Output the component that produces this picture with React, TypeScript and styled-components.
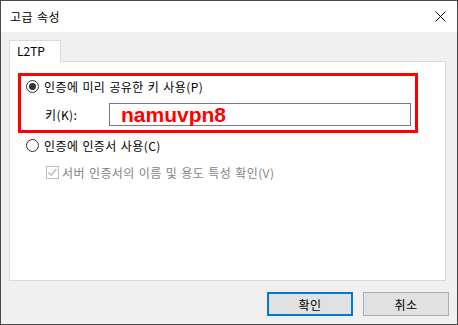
import styled, { createGlobalStyle } from "styled-components";

const GlobalStyle = createGlobalStyle`
  html, body {
    margin: 0;
    padding: 0;
    background: #ffffff;
  }
  * {
    box-sizing: border-box;
  }
`;

const FONT = `"Noto Sans CJK KR", "Noto Sans", sans-serif`;

const Window = styled.div`
  display: flex;
  flex-direction: column;
  width: 458px;
  height: 325px;
  border: 1px solid #4a4a4a;
  background: #f0f0f0;
  font-family: ${FONT};
  font-size: 12px;
  letter-spacing: 0.4px;
  word-spacing: 1px;
  color: #000;
`;

const TitleBar = styled.div`
  display: flex;
  align-items: center;
  justify-content: space-between;
  height: 31px;
  padding-left: 9px;
  padding-right: 11px;
  background: #ffffff;
`;

const Title = styled.span`
  line-height: 16px;
`;

const Body = styled.div`
  flex: 1;
  display: flex;
  flex-direction: column;
  padding: 8px 8px 8px 8px;
`;

const TabStrip = styled.div`
  display: flex;
  height: 22px;
  position: relative;
  z-index: 1;
`;

const Tab = styled.div`
  width: 52px;
  height: 22px;
  padding-left: 7px;
  line-height: 20px;
  letter-spacing: 0;
  background: #ffffff;
  border: 1px solid #d9d9d9;
  border-bottom: none;
`;

const Panel = styled.div`
  flex: 1;
  display: flex;
  flex-direction: column;
  margin-top: -1px;
  margin-right: 3px;
  padding: 11px 8px 0 8px;
  background: #ffffff;
  border: 1px solid #d9d9d9;
`;

const Highlight = styled.div`
  display: flex;
  flex-direction: column;
  width: 400px;
  padding: 0 0 4px 5px;
  border: 3px solid #ff0000;
`;

const Row = styled.div<{ $indent?: number; $gap?: number; $top?: number }>`
  display: flex;
  align-items: center;
  height: 20px;
  margin-top: ${(p) => p.$top ?? 0}px;
  padding-left: ${(p) => p.$indent ?? 0}px;
  gap: ${(p) => p.$gap ?? 5}px;
  white-space: nowrap;
`;

const Radio = styled.span<{ $checked?: boolean }>`
  display: inline-flex;
  align-items: center;
  justify-content: center;
  width: 13px;
  height: 13px;
  border: 1px solid #333333;
  border-radius: 50%;
  background: #ffffff;
  flex-shrink: 0;
  &::after {
    content: "";
    display: ${(p) => (p.$checked ? "block" : "none")};
    width: 7px;
    height: 7px;
    border-radius: 50%;
    background: #333333;
  }
`;

const KeyRow = styled.div`
  display: flex;
  align-items: center;
  margin-top: 7px;
`;

const KeyLabel = styled.span`
  flex: 0 0 64px;
  margin-left: 19px;
`;

const KeyInput = styled.div`
  flex: 0 0 302px;
  height: 23px;
  padding-left: 11px;
  border: 1px solid #7a7a7a;
  font-family: "Liberation Sans", Arial, sans-serif;
  font-weight: bold;
  font-size: 21px;
  line-height: 21px;
  letter-spacing: 0;
  color: #ff0000;
`;

const Check = styled.span`
  display: inline-flex;
  width: 13px;
  height: 13px;
  border: 1px solid #bcbcbc;
  background: #ffffff;
  flex-shrink: 0;
`;

const Label = styled.span<{ $disabled?: boolean }>`
  color: ${(p) => (p.$disabled ? "#838383" : "#000")};
`;

const ButtonRow = styled.div`
  display: flex;
  justify-content: flex-end;
  gap: 10px;
  margin-top: 11px;
`;

const Button = styled.button<{ $primary?: boolean }>`
  width: 86px;
  height: 24px;
  padding: 0;
  font-family: ${FONT};
  font-size: 12px;
  letter-spacing: 0.4px;
  color: #000;
  background: #e1e1e1;
  border: ${(p) => (p.$primary ? "2px solid #0078d7" : "1px solid #adadad")};
`;

export default function App() {
  return (
    <>
      <GlobalStyle />
      <Window>
        <TitleBar>
          <Title>고급 속성</Title>
          <svg width="11" height="11" viewBox="0 0 11 11">
            <path d="M0.5 0.5 L10.5 10.5 M10.5 0.5 L0.5 10.5" stroke="#000" strokeWidth="1" />
          </svg>
        </TitleBar>
        <Body>
          <TabStrip>
            <Tab>L2TP</Tab>
          </TabStrip>
          <Panel>
            <Highlight>
              <Row>
                <Radio $checked />
                <Label>인증에 미리 공유한 키 사용(P)</Label>
              </Row>
              <KeyRow>
                <KeyLabel>키(K):</KeyLabel>
                <KeyInput>namuvpn8</KeyInput>
              </KeyRow>
            </Highlight>
            <Row $indent={8} $top={2}>
              <Radio />
              <Label>인증에 인증서 사용(C)</Label>
            </Row>
            <Row $indent={28} $gap={3} $top={7}>
              <Check>
                <svg width="11" height="11" viewBox="0 0 11 11">
                  <path d="M1.5 5.5 L4.2 8.3 L9.5 2" fill="none" stroke="#bcbcbc" strokeWidth="1.4" />
                </svg>
              </Check>
              <Label $disabled>서버 인증서의 이름 및 용도 특성 확인(V)</Label>
            </Row>
          </Panel>
          <ButtonRow>
            <Button $primary>확인</Button>
            <Button>취소</Button>
          </ButtonRow>
        </Body>
      </Window>
    </>
  );
}
